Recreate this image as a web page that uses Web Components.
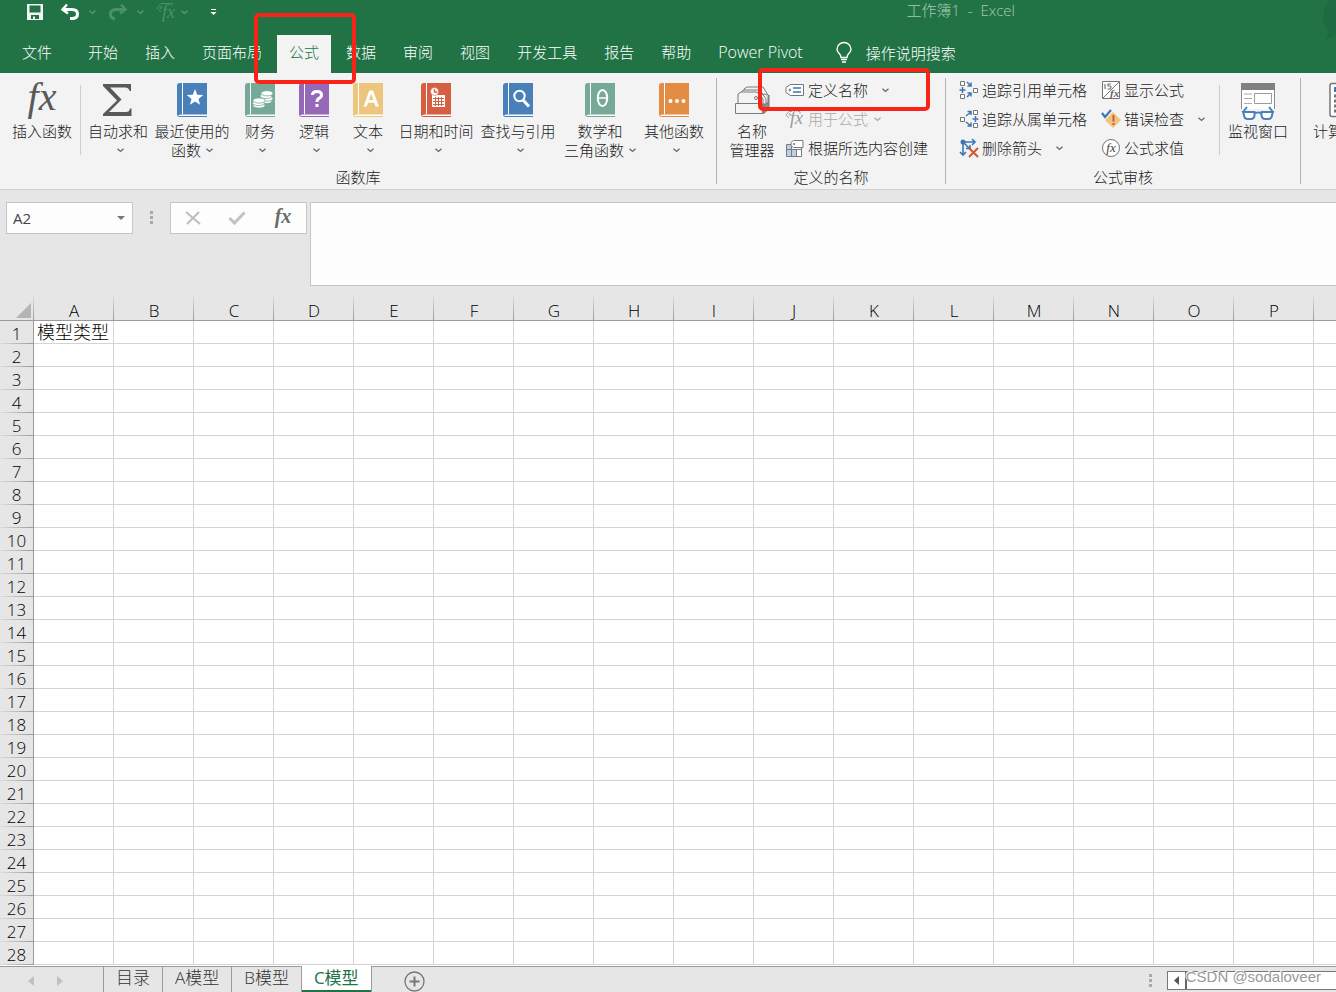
<!DOCTYPE html>
<html lang="zh-CN">
<head>
<meta charset="utf-8">
<title>工作簿1 - Excel</title>
<style>
  html, body { margin: 0; height: 100%; }
  body { font: 300 15px/19px "Open Sans", "Noto Sans CJK SC", sans-serif; color: #1c1c1c; background: #e6e6e6; overflow: hidden; }
  svg { overflow: visible; }
</style>
</head>
<body>
<excel-app>
  <title-bar slot="title"></title-bar>
  <tab-strip slot="tabs">
    <ribbon-tab class="file">文件</ribbon-tab>
    <ribbon-tab>开始</ribbon-tab>
    <ribbon-tab>插入</ribbon-tab>
    <ribbon-tab>页面布局</ribbon-tab>
    <ribbon-tab active>公式</ribbon-tab>
    <ribbon-tab>数据</ribbon-tab>
    <ribbon-tab>审阅</ribbon-tab>
    <ribbon-tab>视图</ribbon-tab>
    <ribbon-tab>开发工具</ribbon-tab>
    <ribbon-tab>报告</ribbon-tab>
    <ribbon-tab>帮助</ribbon-tab>
    <ribbon-tab latin>Power Pivot</ribbon-tab>
  </tab-strip>
  <ribbon-bar slot="ribbon">
    <ribbon-group label="函数库" size="library">
      <big-button label="插入函数" size="first">
        <svg width="30" height="34"><text x="15" y="27" text-anchor="middle" font-family="Liberation Serif" font-style="italic" font-size="40" font-weight="400" fill="#595959">fx</text></svg>
      </big-button>
      <ribbon-rule></ribbon-rule>
      <big-button label="自动求和" caret size="m">
        <svg width="30" height="34"><path d="M0 1H28V8H26.500Q26 4.500 22 4.500H7L18.500 16.500 6 29H23Q26.500 29 27 25.500H28.500V33H0V31L14 17.500 0 3Z" fill="#595959"/></svg>
      </big-button>
      <big-button label="最近使用的" line2="函数" caret size="l">
        <book-icon color="#4a80b9"><svg width="24" height="30"><path d="M12 6l2.200 5.800 6 .3-4.700 3.800 1.600 5.900L12 18.500 6.900 21.800l1.600-5.900L3.800 12.100l6-.3z" fill="#fff"/></svg></book-icon>
      </big-button>
      <big-button label="财务" caret size="s">
        <book-icon color="#77a998"><svg width="24" height="30" fill="#fff" stroke="#77a998" stroke-width=".8"><ellipse cx="15" cy="18" rx="6" ry="2.600"/><ellipse cx="16" cy="15.500" rx="6" ry="2.600"/><ellipse cx="15" cy="13" rx="6" ry="2.600"/><ellipse cx="16" cy="10.300" rx="6" ry="2.600"/><ellipse cx="8" cy="22.500" rx="6" ry="2.600"/><ellipse cx="7.500" cy="20" rx="6" ry="2.600"/><ellipse cx="8" cy="17.500" rx="6" ry="2.600"/></svg></book-icon>
      </big-button>
      <big-button label="逻辑" caret size="s">
        <book-icon color="#9668b8"><svg width="24" height="30"><path d="M7.500 12Q7.500 8.500 12 8.500T16.500 12Q16.500 14.200 14 15.300 12 16.300 12 19" fill="none" stroke="#fff" stroke-width="3"/><path d="M10.500 21h3v3h-3z" fill="#fff"/></svg></book-icon>
      </big-button>
      <big-button label="文本" caret size="s">
        <book-icon color="#edc67d"><svg width="24" height="30"><path d="M4.500 23.500L10.300 7.500H14L20 23.500H16.500L15.200 19.700H9L7.800 23.500ZM10 17H14.300L12.100 10.500Z" fill="#fff" fill-rule="evenodd"/></svg></book-icon>
      </big-button>
      <big-button label="日期和时间" caret size="l">
        <book-icon color="#d65f42"><svg width="24" height="30"><path d="M5 12H18V24H5Z" fill="#fff"/><path d="M6 15.500H17M6 18.500H17M6 21.500H17M8.500 14V23M11.500 14V23M14.500 14V23" stroke="#d65f42"/><circle cx="7.500" cy="8.500" r="4" fill="#fff" stroke="#d65f42" stroke-width=".6"/><path d="M7.500 6V9H10" stroke="#d65f42" stroke-width="1.300" fill="none"/></svg></book-icon>
      </big-button>
      <big-button label="查找与引用" caret size="l">
        <book-icon color="#4a80b9"><svg width="24" height="30" fill="none" stroke="#fff"><circle cx="10.500" cy="13" r="5.200" stroke-width="2"/><path d="M14 17l6 6.500" stroke-width="3"/></svg></book-icon>
      </big-button>
      <big-button label="数学和" line2="三角函数" caret size="l">
        <book-icon color="#77a998"><svg width="24" height="30" fill="none" stroke="#fff"><ellipse cx="11.500" cy="15" rx="4.700" ry="8" stroke-width="2"/><path d="M7 15h9" stroke-width="1.500"/></svg></book-icon>
      </big-button>
      <big-button label="其他函数" caret size="m">
        <book-icon color="#e38c43"><svg width="24" height="30" fill="#fff"><circle cx="5.500" cy="18" r="2"/><circle cx="12" cy="18" r="2"/><circle cx="18.500" cy="18" r="2"/></svg></book-icon>
      </big-button>
    </ribbon-group>
    <ribbon-group label="定义的名称" size="names">
      <big-button label="名称" line2="管理器" size="m">
        <svg width="36" height="34" fill="#f3f3f3" stroke="#7b7b7b"><path d="M29 21l6-9v14l-6 5z" fill="#8a8a8a"/><path d="M10 12V6l3-2h16l5 8v8H10z"/><path d="M7 14V9l3-2h16l6 9v5H7z"/><path d="M4 21V11l3-2h16l6 7v5z"/><circle cx="22" cy="15" r="1.500"/><path d="M24 15q5-6 9-3" fill="none"/><path d="M1.500 20.500h27v10h-27z"/></svg>
      </big-button>
      <button-stack>
        <small-button label="定义名称" caret gap="wide"><svg width="20" height="20" fill="none" stroke="#757575"><path d="M5.500 4.500H18.500V15.500H5.500L1 12.500V7.500Z" fill="#fff"/><circle cx="4.800" cy="10" r="1"/><path d="M8 8h8M8 12h8" stroke="#3e76b5" stroke-width="1.500"/></svg></small-button>
        <small-button label="用于公式" caret disabled><svg width="20" height="20" fill="none" stroke="#a6a6a6"><path d="M4 9L1 6 4 2.500H7M13 2.500h2V5" /><circle cx="5" cy="5.500" r=".8"/><text x="5" y="15" font-family="Liberation Serif" font-style="italic" font-size="18" font-weight="400" fill="#999" stroke="none">fx</text></svg></small-button>
        <small-button label="根据所选内容创建"><svg width="20" height="20" stroke="#7b7b7b"><path d="M1.500 6.500h15v12h-15z" fill="#fff"/><path d="M2 7h5v4H2zM2 12h10v6H2z" fill="#b9d0e8" stroke="none"/><path d="M1.500 11.500h15M6.500 7v11M11.500 11v7" fill="none"/><path d="M8.500 2.500h9.500v7H8.500L6 7.500V4.500z" fill="#fff"/><circle cx="9" cy="6" r=".6"/></svg></small-button>
      </button-stack>
    </ribbon-group>
    <ribbon-group label="公式审核" size="audit">
      <button-stack>
        <small-button label="追踪引用单元格"><svg width="20" height="20" fill="none" stroke="#757575"><path d="M1.500 1.500h4v4h-4zM1.500 14.500h4v4h-4zM14.500 8.500h4v4h-4z" fill="#fff"/><path d="M3.500 7v6M.5 10h6M8 2l4 4M12 2.500V6H8.500M8 17l4-4M8.500 13H12v3.500" stroke="#3e76b5" stroke-width="1.500"/></svg></small-button>
        <small-button label="追踪从属单元格"><svg width="20" height="20" fill="none" stroke="#757575"><path d="M14.500 1.500h4v4h-4zM14.500 14.500h4v4h-4zM1.500 8.500h4v4h-4z" fill="#fff"/><path d="M16.500 7v6M13.500 10h6M7 7l5-4M8.500 2.500H12V6M7 13l5 4M8.500 17H12v-3.500" stroke="#3e76b5" stroke-width="1.500"/></svg></small-button>
        <small-button label="删除箭头" caret gap="wide"><svg width="20" height="20" fill="none" stroke="#3e76b5" stroke-width="2"><circle cx="4" cy="4" r="2.500" fill="#3e76b5" stroke="none"/><path d="M4 4h12M13 1l3 3-3 3M4 4v13M1 14l3 3 3-3M5 5l6 6M7 10.500h4V7" stroke-width="1.600"/><path d="M10 10l9 9M19 10l-9 9" stroke="#d65532"/></svg></small-button>
      </button-stack>
      <button-stack>
        <small-button label="显示公式"><svg width="20" height="20" fill="none" stroke="#757575"><path d="M1.500 1.500h17v17h-17zM18 2L2 18" fill="#fff"/><path d="M4 4v5M10 4H7v2h2q2 1 0 3H6.500" stroke-width="1.200"/><text x="9" y="17" font-family="Liberation Serif" font-style="italic" font-size="11" font-weight="700" fill="#666" stroke="none">fx</text></svg></small-button>
        <small-button label="错误检查" caret gap="wide"><svg width="20" height="20"><path d="M12 3l8 8-8 8-8-8z" fill="#edc67d"/><path d="M1 4l3 4 6-7" fill="none" stroke="#3e76b5" stroke-width="2.200"/><path d="M12.500 6v6.500M12.500 14v2" stroke="#d65532" stroke-width="2"/></svg></small-button>
        <small-button label="公式求值"><svg width="20" height="20"><circle cx="10" cy="10" r="8.500" fill="#fff" stroke="#757575"/><text x="10" y="14" text-anchor="middle" font-family="Liberation Serif" font-style="italic" font-size="13" font-weight="400" fill="#404040">fx</text></svg></small-button>
      </button-stack>
      <ribbon-rule></ribbon-rule>
      <big-button label="监视窗口" size="xl">
        <svg width="36" height="38" viewBox="0 0 36 38"><path d="M1.500 1v29h33V1z" fill="#fff" stroke="#8a8a8a"/><path d="M1 0h34v7H1z" fill="#808080"/><path d="M4 11h8M4 15.500h8M4 20.500h8" stroke="#aaa"/><path d="M14.500 10.500h17v10h-17z" fill="none" stroke="#9a9a9a"/><path d="M0 26h36v12H0z" fill="#f3f3f3"/><path d="M3 29L7 24M33 29L29 24M3 29h11.500v3q0 4-4 4H8q-4 0-4-4zM21.500 29H33l-1 3q0 4-4 4h-2.500q-4 0-4-4zM14 31q4-3 8 0" fill="#fff" stroke="#4a80b9" stroke-width="2"/></svg>
      </big-button>
    </ribbon-group>
    <ribbon-group label="" size="calc">
      <big-button label="计算选项" size="xl">
        <svg width="28" height="34" fill="#fff" stroke="#757575"><rect x="1" y=".5" width="26" height="33" rx="2" stroke-width="1.500"/><path d="M5 4h18v5H5z" fill="#3e76b5" stroke="none"/><path d="M5 13h18M5 18h18M5 23h18M5 28h18" stroke-width="3" stroke-dasharray="4 3"/></svg>
      </big-button>
    </ribbon-group>
  </ribbon-bar>
  <formula-bar slot="formula"></formula-bar>
  <sheet-grid slot="grid"></sheet-grid>
  <sheet-bar slot="sheets"></sheet-bar>
</excel-app>

<script>
const define = (name, html, setup) => {
  const template = document.createElement('template');
  template.innerHTML = html;
  customElements.define(name, class extends HTMLElement {
    constructor() {
      super();
      this.attachShadow({ mode: 'open' }).append(template.content.cloneNode(true));
    }
    connectedCallback() {
      if (setup && !this.ready) { this.ready = true; setup(this.shadowRoot, this); }
    }
  });
};
const CARET = '<svg class="caret" width="7" height="5" viewBox="0 0 7 5" aria-hidden="true"><path d="M.5 .8L3.500 3.500 6.500 .8" fill="none" stroke="currentColor" stroke-width="1.300"/></svg>';
const RESET = 'button{font:inherit;color:inherit;background:none;border:0;padding:0;margin:0;white-space:nowrap}svg{overflow:visible}';

define('excel-app', `<style>
  :host { display: flex; flex-direction: column; min-height: 100vh; position: relative; overflow: hidden; }
  ::slotted(*) { flex: none; }
  ::slotted(sheet-grid) { flex: 1 1 0; min-height: 0; }
  .mark { position: absolute; box-sizing: border-box; border: 4px solid #fa2318; border-radius: 5px; pointer-events: none; }
  .tab { left: 254px; top: 13px; width: 102px; height: 71px; }
  .name { left: 758px; top: 68px; width: 172px; height: 43px; }
  .water { position: absolute; right: 15px; bottom: 6px; font: 400 15px/18px "Liberation Sans", sans-serif; color: #999; text-shadow: -1px -1px 0 #fff; }
</style>
<slot name="title"></slot><slot name="tabs"></slot><slot name="ribbon"></slot><slot name="formula"></slot><slot name="grid"></slot><slot name="sheets"></slot>
<div class="mark tab"></div><div class="mark name"></div><div class="water">CSDN @sodaloveer</div>`);

define('title-bar', `<style>${RESET}
  :host { display: flex; align-items: center; height: 24px; padding-left: 26px; background: #217346; color: #fff; position: relative; }
  button { display: flex; height: 24px; align-items: center; }
  .dim { color: #5a9a76; }
  .save { margin-right: 16px; }
  .arrow { width: 13px; justify-content: center; margin-right: 9px; }
  .undo, .redo { margin-right: 6px; }
  .more { margin-left: 10px; }
  h1 { position: absolute; right: 321px; top: 1px; margin: 0; font: inherit; white-space: pre; color: #a5cbb4; }
  .art { position: absolute; right: 0; top: 0; }
</style>
<button class="save" aria-label="保存"><svg width="18" height="18" viewBox="0 0 18 18"><path d="M1 1h16v16H1zM3.500 2.500v7h11v-7zM5 12v4h2v-2.500h2V16h4v-4z" fill="#f4f4f4" fill-rule="evenodd"/></svg></button>
<button class="undo" aria-label="撤消"><svg width="20" height="18" viewBox="0 0 20 18" fill="none" stroke="#fff"><path d="M7 1.500L2.500 6.500 8 10.500" stroke-width="2.400"/><path d="M3 6.500H12Q17.500 6.500 17.500 11T12 15.500H10" stroke-width="3"/></svg></button>
<button class="arrow dim" aria-label="撤消列表">${CARET}</button>
<button class="redo dim" aria-label="恢复"><svg width="20" height="18" viewBox="0 0 20 18" fill="none" stroke="#4b9069"><path d="M13 1.500L17.500 6.500 12 10.500" stroke-width="2.400"/><path d="M17 6.500H8Q2.500 6.500 2.500 11T7 15.500" stroke-width="3"/></svg></button>
<button class="arrow dim" aria-label="恢复列表">${CARET}</button>
<button class="fx dim" aria-label="用于公式"><svg width="22" height="20" viewBox="0 0 22 20" fill="none" stroke="#4b9069"><path d="M5 10L1 6 5 1.500H16V4"/><circle cx="5" cy="5.500" r="1"/><text x="6" y="16" font-family="Liberation Serif" font-style="italic" font-size="18" font-weight="400" fill="#4b9069" stroke="none">fx</text></svg></button>
<button class="arrow dim" aria-label="公式列表">${CARET}</button>
<button class="more" aria-label="自定义"><svg width="7" height="10" viewBox="0 0 7 10"><path d="M1 2.500h5" stroke="#fff"/><path d="M.5 5h6l-3 3z" fill="#fff"/></svg></button>
<h1>工作簿1  -  Excel</h1>
<svg class="art" width="18" height="44" aria-hidden="true"><path d="M18 0H12Q5 6 5 18 6 27 11 31L7 40 18 35Z" fill="#1f6b41"/></svg>`);

define('tab-strip', `<style>${RESET}
  :host { display: flex; align-items: flex-end; gap: 3px; height: 49px; padding-left: 10px; background: #217346; color: #fff; white-space: nowrap; }
  ::slotted(.file) { margin-right: 9px; }
  button { display: flex; align-items: center; gap: 14px; height: 38px; box-sizing: border-box; padding-bottom: 2px; margin-left: 18px; }
</style><slot></slot>
<button><svg width="16" height="22" viewBox="0 0 16 22" fill="none" stroke="#fff"><path d="M5 15.500Q5 13 3 11.200 1 9 1 7.500A6.800 6.800 0 0 1 15 7.500Q15 9 13 11.200 11 13 11 15.500Z" stroke-width="1.400"/><path d="M5 17.500h6M6 20h4" stroke-width="1.500"/></svg><span>操作说明搜索</span></button>`);

define('ribbon-tab', `<style>${RESET}
  :host { display: block; }
  button { height: 38px; padding: 0 12px 4px; }
  :host([latin]) button { font-size: 16px; }
  :host([active]) button { background: #f3f3f3; color: #217346; }
</style><button><slot></slot></button>`);

define('ribbon-bar', `<style>
  :host { display: flex; height: 116px; background: #f3f3f3; border-bottom: 1px solid #d0d0d0; overflow: hidden; }
</style><slot></slot>`);

define('ribbon-group', `<style>
  :host { display: flex; flex-direction: column; flex: none; box-sizing: border-box; height: 106px; margin-top: 5px; border-right: 1px solid #b4b4b4; --inset: 4px; }
  .items { display: flex; align-items: flex-start; height: 85px; padding-left: var(--inset); margin-bottom: 5px; }
  .label { height: 16px; line-height: 19px; text-align: center; }
  :host([size=library]) { width: 717px; }
  :host([size=names]) { width: 229px; --inset: 2px; }
  :host([size=audit]) { width: 355px; --inset: 13px; }
  :host([size=calc]) { width: 240px; --inset: 8px; border: 0; }
</style><div class="items"><slot></slot></div><div class="label"></div>`,
(root, host) => {
  const label = root.querySelector('.label');
  label.textContent = host.getAttribute('label');
});

define('ribbon-rule', `<style>:host { display: block; flex: none; width: 1px; height: 70px; margin: 7px 4px 0 0; background: #cfcfcf; }</style>`);

define('big-button', `<style>${RESET}
  :host { display: block; flex: none; }
  button { display: flex; flex-direction: column; align-items: center; width: 100%; }
  .icon { height: 34px; margin: 5px 0; display: flex; }
  .line { display: flex; align-items: center; height: 19px; }
  .caret { margin-left: 5px; color: #666; }
  :host([size=first]) { width: 76px; } :host([size=s]) { width: 54px; }
  :host([size=m]) { width: 66px; } :host([size=l]) { width: 82px; } :host([size=xl]) { width: 68px; }
</style><button><span class="icon"><slot></slot></span><span class="line one"></span><span class="line two"></span></button>`,
(root, host) => {
  root.querySelector('.one').textContent = host.getAttribute('label');
  const two = root.querySelector('.two');
  two.textContent = host.getAttribute('line2') || '';
  if (host.hasAttribute('caret')) two.insertAdjacentHTML('beforeend', CARET);
});

define('book-icon', `<style>
  :host { display: block; position: relative; width: 30px; height: 34px; }
  .back { display: block; }
  ::slotted(svg) { position: absolute; left: 6px; top: 0; }
</style><svg class="back" width="30" height="34"><path d="M3 0H30V34H3Q0 34 0 31V3Q0 0 3 0Z" fill="currentColor"/><path d="M5.500 0V31" stroke="#fff"/><path d="M30 31.500H4Q1 31.500 1.500 33H30Z" fill="#fff"/></svg><slot></slot>`,
(root, host) => { host.style.color = host.getAttribute('color'); });

define('button-stack', `<style>
  :host { display: flex; flex-direction: column; flex: none; margin-right: 2px; }
</style><slot></slot>`);

define('small-button', `<style>${RESET}
  :host { display: block; height: 29px; margin-right: 12px; }
  button { display: flex; align-items: center; height: 24px; }
  .text { margin-left: 3px; }
  .caret { margin-left: 6px; color: #666; }
  :host([gap=wide]) .caret { margin-left: 14px; }
  :host([disabled]) button, :host([disabled]) .caret { color: #a8a8a8; }
</style><button><slot></slot><span class="text"></span></button>`,
(root, host) => {
  root.querySelector('.text').textContent = host.getAttribute('label');
  const button = root.querySelector('button');
  button.disabled = host.hasAttribute('disabled');
  if (host.hasAttribute('caret')) button.insertAdjacentHTML('beforeend', CARET);
});

define('formula-bar', `<style>${RESET}
  :host { display: flex; align-items: flex-start; height: 95px; padding: 12px 0 0 6px; background: #e6e6e6; }
  .box { display: flex; align-items: center; box-sizing: border-box; height: 32px; border: 1px solid #c6c6c6; background: #fdfdfd; }
  .box button { display: flex; align-items: center; justify-content: center; }
  .name { width: 127px; }
  input { flex: 1; min-width: 0; border: 0; background: none; padding: 0 0 0 6px; font: 400 15px/19px "Open Sans", sans-serif; color: #444; outline: 0; }
  .name button { width: 22px; height: 30px; }
  .dots { margin: 9px 16px 0; }
  .tools { width: 137px; justify-content: space-around; }
  textarea { flex: 1; min-width: 0; height: 84px; margin-left: 3px; box-sizing: border-box; border: 1px solid #c6c6c6; border-right: 0; background: #fdfdfd; resize: none; outline: 0; font: inherit; }
</style>
<div class="box name"><input value="A2" aria-label="名称框"><button aria-label="名称列表"><svg width="8" height="4"><path d="M0 0h8L4 4z" fill="#777"/></svg></button></div>
<svg class="dots" width="5" height="14" fill="#a8a8a8"><path d="M1 0h3v3H1zM1 5h3v3H1zM1 10h3v3H1z"/></svg>
<div class="box tools">
<button aria-label="取消"><svg width="16" height="14"><path d="M1 1l14 12M14 1L2 13" stroke="#bdbdbd" stroke-width="2"/></svg></button>
<button aria-label="输入"><svg width="18" height="14"><path d="M1.500 7L6.500 12 16.500 1.500" stroke="#c2c2c2" stroke-width="3" fill="none"/></svg></button>
<button aria-label="插入函数"><svg width="18" height="22"><text x="9" y="16" text-anchor="middle" font-family="Liberation Serif" font-style="italic" font-weight="700" font-size="20" fill="#6a6a6a">fx</text></svg></button>
</div>
<textarea aria-label="编辑栏"></textarea>`);

define('sheet-grid', `<style>
  :host { display: block; overflow: hidden; background: #fff; color: #000; }
  table { border-collapse: separate; border-spacing: 0; table-layout: fixed; width: 1394px; }
  th, td { box-sizing: border-box; height: 23px; padding: 0; font-size: 17px; font-weight: 300; line-height: 22px; overflow: hidden; white-space: nowrap; }
  thead th { height: 24px; border-bottom: 1px solid #9b9b9b; background: linear-gradient(#d8d8d8, #9b9b9b) right / 1px 100% no-repeat #e6e6e6; line-height: 19px; padding-top: 4px; }
  thead .corner { width: 34px; text-align: right; line-height: 0; }
  .corner svg { margin-right: 3px; }
  tbody th { border-right: 1px solid #9b9b9b; background: linear-gradient(90deg, #dcdcdc, #9b9b9b) bottom / 100% 1px no-repeat #e6e6e6; padding-top: 2px; line-height: 20px; }
  td { border-right: 1px solid #d4d4d4; border-bottom: 1px solid #d4d4d4; font-size: 18px; padding-left: 3px; }
</style><table><thead><tr><th class="corner"><svg width="15" height="15"><path d="M15 0V15H0Z" fill="#b4b4b4"/></svg></th></tr></thead><tbody></tbody></table>`,
root => {
  const cols = 'ABCDEFGHIJKLMNOPQ';
  const head = root.querySelector('thead tr'), body = root.querySelector('tbody');
  for (const c of cols) { const th = document.createElement('th'); th.scope = 'col'; th.textContent = c; head.append(th); }
  for (let r = 1; r <= 28; r++) {
    const tr = body.insertRow(), th = document.createElement('th');
    th.scope = 'row'; th.textContent = r; tr.append(th);
    for (const c of cols) tr.insertCell();
  }
  body.rows[0].cells[1].textContent = '模型类型';
});

define('sheet-bar', `<style>${RESET}
  :host { display: flex; align-items: flex-start; height: 26px; box-sizing: border-box; border-top: 1px solid #9b9b9b; background: #e6e6e6; color: #333; }
  .nav { display: flex; gap: 23px; margin: 9px 40px 0 28px; }
  .nav button { display: flex; }
  .tab { height: 25px; padding: 0 12px; border-left: 1px solid #9b9b9b; font-size: 17px; line-height: 21px; display: flex; }
  .active { background: #fff; color: #217346; border-right: 1px solid #9b9b9b; box-shadow: inset 0 -2px #217346; margin-top: -1px; height: 26px; padding-top: 1px; font-weight: 400; }
  .add { margin: 4px 0 0 32px; height: 21px; display: flex; }
  .spacer { flex: 1; }
  .dots { margin: 7px 15px 0 0; }
  .scroll { width: 169px; height: 19px; margin-top: 4px; box-sizing: border-box; border: 1px solid #777; border-right: 0; background: #fff; display: flex; align-items: center; }
  .scroll button { width: 17px; height: 17px; display: flex; align-items: center; justify-content: center; }
  .thumb { flex: 1; height: 17px; border-left: 2px solid #666; }
</style>
<div class="nav"><button aria-label="上一个"><svg width="6" height="10"><path d="M6 0v10L0 5z" fill="#c0c0c0"/></svg></button><button aria-label="下一个"><svg width="6" height="10"><path d="M0 0v10l6-5z" fill="#c0c0c0"/></svg></button></div>
<button class="tab">目录</button><button class="tab">A模型</button><button class="tab">B模型</button><button class="tab active">C模型</button>
<button class="add" aria-label="新工作表"><svg width="21" height="21" fill="none" stroke="#777"><circle cx="10.500" cy="10.500" r="9.500" stroke-width="1.300"/><path d="M10.500 5.500v10M5.500 10.500h10" stroke-width="2"/></svg></button>
<span class="spacer"></span>
<svg class="dots" width="3" height="14" fill="#a8a8a8"><path d="M0 0h3v3H0zM0 5h3v3H0zM0 10h3v3H0z"/></svg>
<div class="scroll"><button aria-label="向左滚动"><svg width="5" height="9"><path d="M5 0v9L0 4.500z" fill="#555"/></svg></button><span class="thumb"></span></div>`);
</script>
</body>
</html>
